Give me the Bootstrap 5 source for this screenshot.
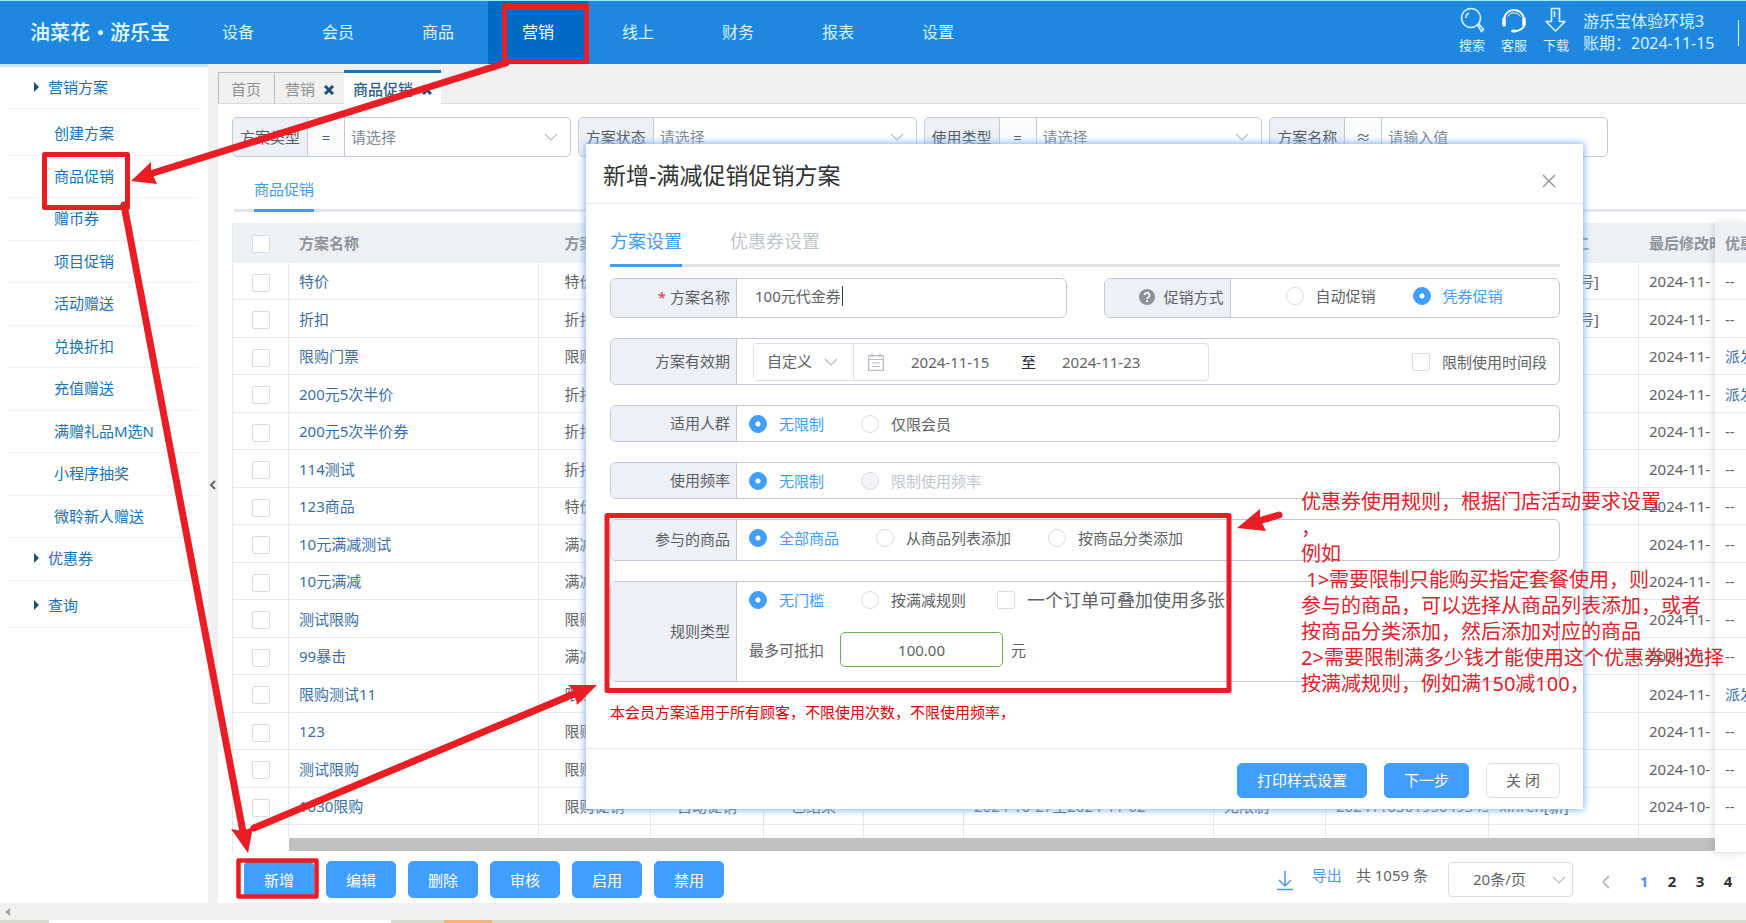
<!DOCTYPE html>
<html lang="zh-CN">
<head>
<meta charset="utf-8">
<meta name="viewport" content="width=device-width, initial-scale=1">
<title>油菜花·游乐宝 - 商品促销</title>
<link rel="stylesheet" href="https://cdn.jsdelivr.net/npm/bootstrap@5.3.0/dist/css/bootstrap.min.css">
<style>
  :root { --line: #c3c9d4; --soft: #e4e9ee; --blue: #409eff; --mark-red: #ea1c24; }
  body { font-family: "Noto Sans", "Noto Sans CJK SC", sans-serif; font-size: 15px; line-height: 24px; color: #606266; background: #fff; min-height: 100vh; position: relative; overflow: hidden; }
  a { text-decoration: none; }
  .form-select, .form-control { font-size: 15px; color: #606266; }
  .form-select { background-image: url("data:image/svg+xml,%3Csvg xmlns='http://www.w3.org/2000/svg' viewBox='0 0 14 14' fill='none' stroke='%23b8bcc6' stroke-width='1.2'%3E%3Cpath d='M1 4l6 6 6-6'/%3E%3C/svg%3E"); background-size: 14px 14px; background-position: right 12px center; }

  /* top bar */
  .topbar { background: #1e88e1; border-top: 1px solid #a6e9f7; height: 64px; color: #d9f4ff; }
  .brand-name { width: 188px; padding-left: 30px; font-size: 20px; font-weight: 500; color: #e6fbff; white-space: nowrap; }
  .brand-dot { width: 5px; height: 5px; border-radius: 50%; background: #e6fbff; margin: 0 7px 0 8px; }
  .topbar .nav-link { width: 100px; padding: 0; line-height: 62px; text-align: center; color: #d9f4ff; font-size: 16px; }
  .topbar .nav-link.active { background: #006bc6; color: #fff; }
  .tool-link { color: #d9f4ff; font-size: 13px; line-height: 20px; width: 42px; padding-top: 6px; text-align: center; }
  .tool-link svg { display: block; margin: 0 auto 2px; }
  .account { font-size: 16px; line-height: 22px; padding: 9px 0 0 6px; width: 161px; white-space: nowrap; }
  .bar-end { width: 1px; height: 26px; background: #d9f4ff; margin: 19px 7px 0 0; }

  /* side menu */
  .side { width: 208px; border-top: 3px solid #c5e6f8; }
  .side a { color: #1673b5; display: flex; align-items: center; margin: 0 9px 0 8px; padding-bottom: 2px; border-bottom: 1px solid #f2f2f3; height: 43px; }
  .side .group-link { padding-left: 26px; gap: 9px; }
  .side .group-link::before { content: ""; border: solid transparent; border-width: 5px 0 5px 5px; border-left-color: #1c4f77; }
  .side .group-first { height: 42px; }
  .side .group-last { height: 47px; padding-top: 4px; }
  .side ul { padding-top: 4px; }
  .side ul a { padding-left: 46px; }
  .side li:nth-child(even) a { height: 42px; }
  .splitter { width: 10px; background: #f0f0f0; color: #666; padding: 0; border: 0; }

  /* page tabs */
  .page-tabs { background: #f0f0f0; height: 40px; padding-top: 6px; align-items: stretch; }
  .page-tabs a { color: #8f8f8f; border: 1px solid #b9bdc0; border-width: 1px 0 0 1px; margin-top: 2px; padding: 4px 13px 0 12px; white-space: nowrap; border-bottom: 1px solid #d9d9d9; }
  .page-tabs a svg { margin: 0 0 2px 9px; }
  .page-tabs a.closable { padding: 4px 10px 0; }
  .page-tabs a.current { margin-top: 0; background: #fff; color: #2d5f8d; font-weight: 500; border: 0; border-top: 3px solid #1075c2; padding: 4px 9px 0; }
  .page-tabs .rest { border-bottom: 1px solid #d9d9d9; }

  /* filters */
  .filters { padding: 13px 138px 0 14px; gap: 7px; }
  .filters .input-group { flex: 1 1 0; height: 40px; flex-wrap: nowrap; }
  .filters .input-group-text { font-size: 15px; background: #edf0f6; color: #555a60; border-color: var(--line); padding: 0; width: 76px; justify-content: center; border-radius: 5px; }
  .filters .op { width: 38px; background: #fafbfd; }
  .filters .form-select, .filters .form-control { border-color: var(--line); padding: 0 6px; border-radius: 5px; color: #7f8792; }
  .filters .form-control::placeholder { color: #7f8792; }

  .list-tabs { margin: 10px 0 11px 16px; border-bottom: 3px solid #e2e5ec; height: 45px; padding-left: 10px; }
  .list-tabs a { color: #4a97ec; margin-left: 10px; height: 45px; line-height: 44px; border-bottom: 3px solid #4a97ec; }

  /* data table */
  .grid-area { margin-left: 14px; }
  .grid-main { border-left: 1px solid var(--soft); }
  .plan-table { table-layout: fixed; border-collapse: separate; border-spacing: 0; margin: 0; color: #606266; }
  .plan-table.main { width: 1518px; }
  .plan-table th, .plan-table td { height: 37px; padding: 0 10px; border-right: 1px solid var(--soft); border-bottom: 1px solid var(--soft); white-space: nowrap; overflow: hidden; line-height: 24px; vertical-align: middle; }
  .plan-table th { height: 40px; background: #edf0f5; color: #909399; font-weight: 600; border-color: #edf0f5; }
  .plan-table tbody tr:nth-child(even) td { height: 38px; }
  .plan-table tbody tr.tail td { height: 13px; border-bottom: 0; line-height: 10px; }
  .plan-table a { color: #3a6ea5; }
  .plan-table .pick { text-align: center; padding: 0; }
  .plan-table .mid { text-align: center; }
  .fixed-pane { width: 31px; box-shadow: -1px 0 8px rgba(0,0,0,.14); z-index: 1; border-bottom: 1px solid var(--soft); }
  .fixed-pane .plan-table { width: 112px; }
  .form-check-input { width: 18px; height: 18px; margin: 0; border: 1px solid #d9dce3; float: none; flex: none; vertical-align: middle; }
  .form-check-input[type=checkbox] { border-radius: 2px; }
  .form-check-input[type=radio]:checked { background-color: var(--blue); border-color: var(--blue); background-image: radial-gradient(circle, #fff 2px, transparent 3px); }
  .form-check-input:disabled { background-color: #f3f4f8; opacity: 1; }
  .h-track { height: 15px; padding-left: 56px; }
  .h-track div { height: 13px; background: #c0c0c0; }

  /* footer */
  .grid-foot { height: 50px; padding: 8px 9px 0 26px; }
  .btn { font-size: 15px; line-height: 24px; border-radius: 5px; padding: 0; }
  .btn-primary { --bs-btn-bg: #409eff; --bs-btn-border-color: #409eff; }
  .grid-foot .btn { width: 70px; height: 37px; }
  .pager-size { width: 125px; height: 35px; border-color: #d9dce3; padding: 0 0 0 24px; border-radius: 4px; background-position: right 6px center; margin: 1px 28px 0 20px; }
  .pager a { color: #303133; font-weight: 700; width: 28px; text-align: center; }
  .pager a.now { color: #4a97ec; }
  .window-scroll { height: 17px; background: #f0f0f0; }
  .window-scroll::before { content: ""; display: block; border: solid transparent; border-width: 4px 5px 4px 0; border-right-color: #a3a3a3; margin-left: 5px; }
  .task-strip { height: 3px; background: #d6dcc9; }

  /* dialog */
  .plan-dialog { position: absolute; top: 144px; left: 586px; right: 163px; background: #fff; box-shadow: 0 0 7px 1px #7fb4f7; z-index: 5; }
  .dlg-head { height: 60px; border-bottom: 1px solid #e4e7ed; padding: 2px 27px 0 17px; }
  .dlg-head h1 { font-size: 23px; line-height: 32px; font-weight: 400; color: #303133; }
  .dlg-close { border: 0; background: none; padding: 0; color: #909399; line-height: 12px; margin-top: 12px; }
  .dlg-body { padding: 0 23px 24px 24px; }
  .dlg-tabs { height: 63px; border-bottom: 3px solid #e4e4e6; gap: 48px; margin-bottom: 11px; }
  .dlg-tabs a { font-size: 18px; line-height: 24px; height: 63px; padding-top: 25px; color: #c0c4cc; }
  .dlg-tabs a.current { color: var(--blue); border-bottom: 3px solid var(--blue); }
  .field { display: flex; border: 1px solid var(--line); border-radius: 6px; overflow: hidden; margin-bottom: 20px; height: 37px; }
  .field-name { width: 126px; flex: none; background: #edf0f6; border-right: 1px solid var(--line); display: flex; align-items: center; justify-content: flex-end; padding: 0 6px 2px 0; color: #5b5e64; }
  .field-body { flex: 1; display: flex; align-items: center; padding: 0 12px; }
  .opt { display: flex; align-items: center; gap: 12px; margin-right: 37px; white-space: nowrap; }
  .opt.on { color: var(--blue); }
  .opt.off { color: #c0c4cc; }
  .h-40 { height: 40px; } .h-42 { height: 42px; } .h-47 { height: 47px; } .h-101 { height: 101px; }
  .bare { border: 0; padding: 0; outline: 0; color: #606266; background: none; }
  .name-input { width: 87px; }
  .caret-bar { width: 1px; height: 20px; background: #333; }
  .period { width: 456px; height: 38px; border: 1px solid #dcdfe6; border-radius: 4px; margin-left: 4px; }
  .period .form-select { width: 100px; height: 36px; border: 0; border-right: 1px solid #dcdfe6; border-radius: 0; padding: 0 0 0 13px; background-position: right 15px center; }
  .period .bare { width: 84px; }
  .big-opt { font-size: 18px; }
  .amount { width: 163px; height: 35px; border: 1px solid #67b346; border-radius: 5px; text-align: center; color: #606266; padding: 0; }
  .tip { color: #e00000; margin: 18px 0 0; }
  .dlg-foot { border-top: 1px solid #e4e7ed; height: 61px; padding: 2px 23px 0; gap: 17px; }
  .dlg-foot .btn { height: 35px; padding: 0 19px; }
  .btn-plain { border: 1px solid #dcdfe6; color: #606266; background: #fff; }

  /* guide marks drawn over the page */
  .guide { position: absolute; inset: 0; z-index: 9; pointer-events: none; }
  .guide svg { position: absolute; top: 0; left: 0; }
  .guide-text { position: absolute; top: 489px; left: 1301px; color: #e0222a; font-size: 20px; line-height: 26px; white-space: pre; margin: 0; }
</style>
</head>
<body class="d-flex flex-column">

<header class="topbar d-flex">
  <div class="brand-name d-flex align-items-center">油菜花<span class="brand-dot"></span>游乐宝</div>
  <nav class="nav flex-nowrap">
    <a class="nav-link" href="#">设备</a><a class="nav-link" href="#">会员</a><a class="nav-link" href="#">商品</a><a class="nav-link active" href="#">营销</a><a class="nav-link" href="#">线上</a><a class="nav-link" href="#">财务</a><a class="nav-link" href="#">报表</a><a class="nav-link" href="#">设置</a>
  </nav>
  <div class="d-flex ms-auto">
    <a class="tool-link" href="#"><svg width="26" height="26" viewBox="0 0 26 26" fill="none" stroke="#d9f4ff" stroke-width="1.6"><circle cx="12" cy="11" r="9.5"/><path d="M7 11a5 5 0 0 1 3-5"/><path d="M18.500 18l1.500-1 4.500 5.500-2 2z"/></svg>搜索</a>
    <a class="tool-link" href="#"><svg width="26" height="26" viewBox="0 0 26 26" fill="none" stroke="#fff" stroke-width="1.8"><path d="M3 13a10 10 0 0 1 20 0"/><path d="M6.500 9.500a7.500 7.500 0 0 1 13 0" stroke-width="1"/><path d="M3 12v6M23 12v6" stroke-width="3.500" stroke-linecap="round"/><path d="M23 19q-2 4-8 5"/><ellipse cx="13" cy="24" rx="3" ry="1.600" fill="#fff" stroke="none"/></svg>客服</a>
    <a class="tool-link" href="#"><svg width="26" height="26" viewBox="0 0 26 26" fill="none" stroke="#d9f4ff" stroke-width="1.600" stroke-linejoin="round"><path d="M8.500 1.500h8v13h5.500l-9.500 9.500L3 14.500h5.500z"/><path d="M11.500 4v6"/></svg>下载</a>
    <div class="account">游乐宝体验环境3<br>账期：2024-11-15</div>
    <div class="bar-end"></div>
  </div>
</header>

<div class="d-flex flex-grow-1">
  <nav class="side flex-shrink-0">
    <a class="group-link group-first" href="#">营销方案</a>
    <ul class="list-unstyled m-0">
      <li><a href="#">创建方案</a></li>
      <li><a href="#">商品促销</a></li>
      <li><a href="#">赠币券</a></li>
      <li><a href="#">项目促销</a></li>
      <li><a href="#">活动赠送</a></li>
      <li><a href="#">兑换折扣</a></li>
      <li><a href="#">充值赠送</a></li>
      <li><a href="#">满赠礼品M选N</a></li>
      <li><a href="#">小程序抽奖</a></li>
      <li><a href="#">微聆新人赠送</a></li>
    </ul>
    <a class="group-link" href="#">优惠券</a>
    <a class="group-link group-last" href="#">查询</a>
  </nav>
  <button class="splitter flex-shrink-0" type="button" aria-label="收起菜单"><svg width="6" height="10" viewBox="0 0 6 10" fill="none" stroke="#666" stroke-width="2"><path d="M5 1L1 5l4 4"/></svg></button>

  <main class="flex-grow-1" style="min-width:0">
    <div class="page-tabs d-flex">
      <a href="#">首页</a>
      <a class="closable" href="#">营销<svg width="10" height="10" viewBox="0 0 10 10" stroke="#1c4f77" stroke-width="3"><path d="M1 1l8 8M9 1L1 9"/></svg></a>
      <a class="current" href="#">商品促销<svg width="10" height="10" viewBox="0 0 10 10" stroke="#1c4f77" stroke-width="3"><path d="M1 1l8 8M9 1L1 9"/></svg></a>
      <div class="rest flex-grow-1"></div>
    </div>

    <form class="filters d-flex">
      <div class="input-group"><label class="input-group-text" for="f1">方案类型</label><span class="input-group-text op">=</span><select class="form-select" id="f1"><option>请选择</option></select></div>
      <div class="input-group"><label class="input-group-text" for="f2">方案状态</label><select class="form-select" id="f2"><option>请选择</option></select></div>
      <div class="input-group"><label class="input-group-text" for="f3">使用类型</label><span class="input-group-text op">=</span><select class="form-select" id="f3"><option>请选择</option></select></div>
      <div class="input-group"><label class="input-group-text" for="f4">方案名称</label><span class="input-group-text op">≈</span><input class="form-control" id="f4" placeholder="请输入值"></div>
    </form>

    <nav class="list-tabs d-flex"><a href="#">商品促销</a></nav>

    <div class="grid-area d-flex">
      <div class="grid-main flex-grow-1 overflow-hidden" style="min-width:0">
        <table class="plan-table main">
          <colgroup><col style="width:56px"><col style="width:250px"><col style="width:112px"><col style="width:113px"><col style="width:100px"><col style="width:100px"><col style="width:250px"><col style="width:112px"><col style="width:163px"><col style="width:150px"><col style="width:112px"></colgroup>
          <thead><tr><th class="pick"><input class="form-check-input" type="checkbox" aria-label="全选"></th><th>方案名称</th><th class="mid">方案类型</th><th colspan="6"></th><th>最后修改员工</th><th>最后修改时间</th></tr></thead>
          <tbody>
            <tr><td class="pick"><input class="form-check-input" type="checkbox" aria-label="特价"></td><td><a href="#">特价</a></td><td class="mid">特价促销</td><td colspan="6"></td><td>体验[体验账号]</td><td>2024-11-</td></tr>
            <tr><td class="pick"><input class="form-check-input" type="checkbox" aria-label="折扣"></td><td><a href="#">折扣</a></td><td class="mid">折扣促销</td><td colspan="6"></td><td>体验[体验账号]</td><td>2024-11-</td></tr>
            <tr><td class="pick"><input class="form-check-input" type="checkbox" aria-label="限购门票"></td><td><a href="#">限购门票</a></td><td class="mid">限购促销</td><td colspan="6"></td><td></td><td>2024-11-</td></tr>
            <tr><td class="pick"><input class="form-check-input" type="checkbox" aria-label="200元5次半价"></td><td><a href="#">200元5次半价</a></td><td class="mid">折扣促销</td><td colspan="6"></td><td></td><td>2024-11-</td></tr>
            <tr><td class="pick"><input class="form-check-input" type="checkbox" aria-label="200元5次半价券"></td><td><a href="#">200元5次半价券</a></td><td class="mid">折扣促销</td><td colspan="6"></td><td></td><td>2024-11-</td></tr>
            <tr><td class="pick"><input class="form-check-input" type="checkbox" aria-label="114测试"></td><td><a href="#">114测试</a></td><td class="mid">折扣促销</td><td colspan="6"></td><td></td><td>2024-11-</td></tr>
            <tr><td class="pick"><input class="form-check-input" type="checkbox" aria-label="123商品"></td><td><a href="#">123商品</a></td><td class="mid">特价促销</td><td colspan="6"></td><td></td><td>2024-11-</td></tr>
            <tr><td class="pick"><input class="form-check-input" type="checkbox" aria-label="10元满减测试"></td><td><a href="#">10元满减测试</a></td><td class="mid">满减促销</td><td colspan="6"></td><td></td><td>2024-11-</td></tr>
            <tr><td class="pick"><input class="form-check-input" type="checkbox" aria-label="10元满减"></td><td><a href="#">10元满减</a></td><td class="mid">满减促销</td><td colspan="6"></td><td></td><td>2024-11-</td></tr>
            <tr><td class="pick"><input class="form-check-input" type="checkbox" aria-label="测试限购"></td><td><a href="#">测试限购</a></td><td class="mid">限购促销</td><td colspan="6"></td><td></td><td>2024-11-</td></tr>
            <tr><td class="pick"><input class="form-check-input" type="checkbox" aria-label="99暴击"></td><td><a href="#">99暴击</a></td><td class="mid">满减促销</td><td colspan="6"></td><td></td><td>2024-11-</td></tr>
            <tr><td class="pick"><input class="form-check-input" type="checkbox" aria-label="限购测试11"></td><td><a href="#">限购测试11</a></td><td class="mid">限购促销</td><td colspan="6"></td><td></td><td>2024-11-</td></tr>
            <tr><td class="pick"><input class="form-check-input" type="checkbox" aria-label="123"></td><td><a href="#">123</a></td><td class="mid">限购促销</td><td colspan="6"></td><td></td><td>2024-11-</td></tr>
            <tr><td class="pick"><input class="form-check-input" type="checkbox" aria-label="测试限购"></td><td><a href="#">测试限购</a></td><td class="mid">限购促销</td><td colspan="6"></td><td></td><td>2024-10-</td></tr>
            <tr><td class="pick"><input class="form-check-input" type="checkbox" aria-label="1030限购"></td><td><a href="#">1030限购</a></td><td class="mid">限购促销</td><td class="mid">自动促销</td><td class="mid">已结束</td><td></td><td>2024-10-27至2024-11-02</td><td>无限制</td><td>2024110301950493451</td><td>xinren[新]</td><td>2024-10-</td></tr>
            <tr class="tail"><td></td><td></td><td></td><td></td><td></td><td></td><td></td><td></td><td></td><td></td><td></td></tr>
          </tbody>
        </table>
        <div class="h-track"><div></div></div>
      </div>
      <div class="fixed-pane flex-shrink-0 overflow-hidden">
        <table class="plan-table">
          <thead><tr><th>优惠券</th></tr></thead>
          <tbody>
            <tr><td>--</td></tr><tr><td>--</td></tr><tr><td><a href="#">派发</a></td></tr><tr><td><a href="#">派发</a></td></tr><tr><td>--</td></tr><tr><td>--</td></tr><tr><td>--</td></tr><tr><td>--</td></tr><tr><td>--</td></tr><tr><td>--</td></tr><tr><td>--</td></tr><tr><td><a href="#">派发</a></td></tr><tr><td>--</td></tr><tr><td>--</td></tr><tr><td>--</td></tr>
          </tbody>
        </table>
      </div>
    </div>

    <div class="grid-foot d-flex align-items-start">
      <div class="d-flex" style="gap:12px">
        <button class="btn btn-primary" type="button">新增</button>
        <button class="btn btn-primary" type="button">编辑</button>
        <button class="btn btn-primary" type="button">删除</button>
        <button class="btn btn-primary" type="button">审核</button>
        <button class="btn btn-primary" type="button">启用</button>
        <button class="btn btn-primary" type="button">禁用</button>
      </div>
      <div class="pager d-flex ms-auto align-items-start">
        <svg class="mt-2" style="margin-right:18px" width="18" height="22" viewBox="0 0 18 22" fill="none" stroke="#4a97ec" stroke-width="1.500"><path d="M9 2v15M3 11l6 6 6-6M1 20.500h16"/></svg>
        <button class="bare" type="button" style="color:#4a97ec;margin:2px 14px 0 0">导出</button>
        <span style="margin-top:2px">共 1059 条</span>
        <select class="form-select pager-size" aria-label="每页条数"><option>20条/页</option></select>
        <svg style="margin:14px 20px 0 0" width="9" height="14" viewBox="0 0 9 14" fill="none" stroke="#b9bdc6" stroke-width="1.800"><path d="M8 1L2 7l6 6"/></svg>
        <div class="d-flex pt-2 text-nowrap" style="margin-right:-5px"><a class="now" href="#">1</a><a href="#">2</a><a href="#">3</a><a href="#">4</a></div>
      </div>
    </div>
  </main>
</div>
<div class="window-scroll d-flex align-items-center"></div>
<div class="task-strip d-flex">
  <div style="width:49px"></div><div class="bg-white" style="width:342px"></div><div style="width:53px"></div><div style="width:48px;background:#f4b276"></div>
</div>

<section class="plan-dialog" role="dialog" aria-label="新增-满减促销促销方案">
  <div class="dlg-head d-flex align-items-center justify-content-between">
    <h1 class="m-0">新增-满减促销促销方案</h1>
    <button class="dlg-close" type="button" aria-label="关闭"><svg width="14" height="14" viewBox="0 0 14 14" stroke="#8f9299" stroke-width="1.400"><path d="M1 1l12 12M13 1L1 13"/></svg></button>
  </div>
  <form class="dlg-body">
    <nav class="dlg-tabs d-flex"><a class="current" href="#">方案设置</a><a href="#">优惠券设置</a></nav>
    <div class="d-flex" style="gap:37px">
      <div class="field h-40 flex-fill w-50">
        <label class="field-name" for="pname"><span class="text-danger me-1">*</span>方案名称</label>
        <div class="field-body pb-1" style="padding-left:18px"><input class="bare name-input" id="pname" value="100元代金券"><span class="caret-bar"></span></div>
      </div>
      <div class="field h-40 flex-fill w-50">
        <div class="field-name"><svg class="me-2" width="16" height="16" viewBox="0 0 16 16"><circle cx="8" cy="8" r="8" fill="#8d9095"/><path d="M5.500 6.200a2.500 2.500 0 1 1 3.700 2.200c-.9.500-1.200.8-1.200 1.600" fill="none" stroke="#fff" stroke-width="1.700"/><circle cx="8" cy="12.200" r="1.100" fill="#fff"/></svg>促销方式</div>
        <div class="field-body pb-1" style="padding-left:55px">
          <label class="opt"><input class="form-check-input" type="radio" name="way">自动促销</label>
          <label class="opt on"><input class="form-check-input" type="radio" name="way" checked>凭券促销</label>
        </div>
      </div>
    </div>
    <div class="field h-47">
      <label class="field-name" for="range">方案有效期</label>
      <div class="field-body">
        <div class="period d-flex align-items-center">
          <select class="form-select" id="range"><option>自定义</option></select>
          <svg style="margin:0 27px 0 14px" width="16" height="18" viewBox="0 0 16 18" fill="none" stroke="#b7bbc4" stroke-width="1.200"><path d="M.6 2.600h14.800v14.800H.6zM4 .5v4M12 .5v4M1 6.500h14M4 10h8M4 13.500h8"/></svg>
          <input class="bare" aria-label="开始日期" value="2024-11-15"><span class="text-dark" style="margin:0 26px">至</span><input class="bare" aria-label="结束日期" value="2024-11-23">
        </div>
        <label class="opt ms-auto me-0"><input class="form-check-input" type="checkbox">限制使用时间段</label>
      </div>
    </div>
    <div class="field">
      <div class="field-name">适用人群</div>
      <div class="field-body">
        <label class="opt on"><input class="form-check-input" type="radio" name="who" checked>无限制</label>
        <label class="opt"><input class="form-check-input" type="radio" name="who">仅限会员</label>
      </div>
    </div>
    <div class="field">
      <div class="field-name">使用频率</div>
      <div class="field-body">
        <label class="opt on"><input class="form-check-input" type="radio" name="freq" checked>无限制</label>
        <label class="opt off"><input class="form-check-input" type="radio" name="freq" disabled>限制使用频率</label>
      </div>
    </div>
    <div class="field h-42">
      <div class="field-name">参与的商品</div>
      <div class="field-body pb-1">
        <label class="opt on"><input class="form-check-input" type="radio" name="goods" checked>全部商品</label>
        <label class="opt"><input class="form-check-input" type="radio" name="goods">从商品列表添加</label>
        <label class="opt"><input class="form-check-input" type="radio" name="goods">按商品分类添加</label>
      </div>
    </div>
    <div class="field h-101 mb-0">
      <div class="field-name">规则类型</div>
      <div class="field-body flex-column align-items-start justify-content-center pb-2" style="gap:20px">
        <div class="d-flex align-items-center">
          <label class="opt on"><input class="form-check-input" type="radio" name="rule" checked>无门槛</label>
          <label class="opt" style="margin-right:31px"><input class="form-check-input" type="radio" name="rule">按满减规则</label>
          <label class="opt big-opt"><input class="form-check-input" type="checkbox">一个订单可叠加使用多张</label>
        </div>
        <div class="d-flex align-items-center">
          <label for="amount">最多可抵扣</label><input class="amount ms-3 me-2" id="amount" value="100.00">元
        </div>
      </div>
    </div>
    <p class="tip">本会员方案适用于所有顾客，不限使用次数，不限使用频率，</p>
  </form>
  <div class="dlg-foot d-flex align-items-center justify-content-end">
    <button class="btn btn-primary" type="button">打印样式设置</button>
    <button class="btn btn-primary" type="button">下一步</button>
    <button class="btn btn-plain" type="button">关 闭</button>
  </div>
</section>

<div class="guide">
  <svg width="1746" height="923" viewBox="0 0 1746 923" fill="none" stroke="#ea1c24" stroke-width="5" stroke-linejoin="round" stroke-linecap="round">
    <rect x="504.500" y="6.500" width="82" height="55"/>
    <rect x="44.500" y="154.500" width="83" height="53"/>
    <rect x="238.500" y="860.500" width="78" height="36" stroke-width="4.500"/>
    <rect x="607" y="515.500" width="622" height="175"/>
    <g stroke-width="7">
      <path d="M506 63L150 174M124 205L243 832M254 828L574 694M1279 515L1262 520"/>
    </g>
    <g fill="#ea1c24" stroke="none">
      <path d="M131 181l20-19 0 9 6 13z"/>
      <path d="M248 853L231 829l12 2 10-4z"/>
      <path d="M597 685l-29 0 7 7 2 13z"/>
      <path d="M1237 528l23-19 0 10 6 12z"/>
    </g>
  </svg>
  <p class="guide-text">优惠券使用规则，根据门店活动要求设置
，
例如
 1&gt;需要限制只能购买指定套餐使用，则
参与的商品，可以选择从商品列表添加，或者
按商品分类添加，然后添加对应的商品
2&gt;需要限制满多少钱才能使用这个优惠券则选择
按满减规则，例如满150减100，</p>
</div>

<script src="https://cdn.jsdelivr.net/npm/bootstrap@5.3.0/dist/js/bootstrap.bundle.min.js"></script>
</body>
</html>
